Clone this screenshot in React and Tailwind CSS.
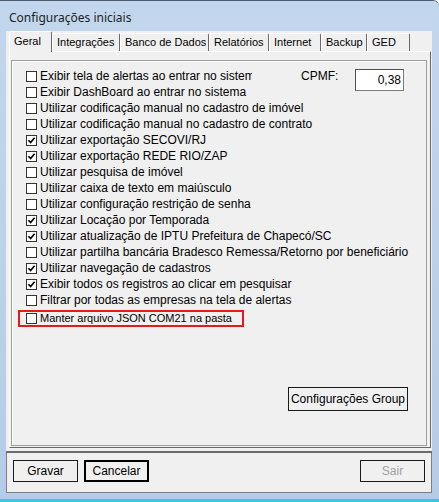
import React, { useState } from 'react';

const tabs = [
  { label: 'Geral', w: 'w-[43px]' },
  { label: 'Integrações', w: 'w-[68px]' },
  { label: 'Banco de Dados', w: 'w-[89px]' },
  { label: 'Relatórios', w: 'w-[60px]' },
  { label: 'Internet', w: 'w-[52px]' },
  { label: 'Backup', w: 'w-[46px]' },
  { label: 'GED', w: 'w-[43px]' },
];

const options = [
  { label: 'Exibir tela de alertas ao entrar no sistema', checked: false },
  { label: 'Exibir DashBoard ao entrar no sistema', checked: false },
  { label: 'Utilizar codificação manual no cadastro de imóvel', checked: false },
  { label: 'Utilizar codificação manual no cadastro de contrato', checked: false },
  { label: 'Utilizar exportação SECOVI/RJ', checked: true },
  { label: 'Utilizar exportação REDE RIO/ZAP', checked: true },
  { label: 'Utilizar pesquisa de imóvel', checked: false },
  { label: 'Utilizar caixa de texto em maiúsculo', checked: false },
  { label: 'Utilizar configuração restrição de senha', checked: false },
  { label: 'Utilizar Locação por Temporada', checked: true },
  { label: 'Utilizar atualização de IPTU Prefeitura de Chapecó/SC', checked: true },
  { label: 'Utilizar partilha bancária Bradesco Remessa/Retorno por beneficiário', checked: false },
  { label: 'Utilizar navegação de cadastros', checked: true },
  { label: 'Exibir todos os registros ao clicar em pesquisar', checked: true },
  { label: 'Filtrar por todas as empresas na tela de alertas', checked: false },
];

function CheckBox({ checked, onChange }) {
  return (
    <span
      onClick={onChange}
      className="w-[11px] h-[11px] shrink-0 border border-[#333333] bg-white flex items-center justify-center"
    >
      {checked && (
        <svg width="9" height="9" viewBox="0 0 9 9">
          <path d="M1.5 4.2 L3.6 6.5 L7.6 1.8" fill="none" stroke="#000" strokeWidth="1.7" />
        </svg>
      )}
    </span>
  );
}

function WinButton({ children, isDefault, disabled, className = '' }) {
  return (
    <button
      type="button"
      disabled={disabled}
      className={`h-[22px] bg-[#f0f0f0] text-[12px] ${
        isDefault ? 'border-2 border-black' : 'border border-[#1a1a1a]'
      } ${disabled ? 'text-[#a0a0a0]' : 'text-black'} ${className}`}
    >
      {children}
    </button>
  );
}

export default function App() {
  const [checks, setChecks] = useState(options.map(o => o.checked));
  const [keepJson, setKeepJson] = useState(false);
  const [activeTab, setActiveTab] = useState(0);

  const toggle = (i) => setChecks(c => c.map((v, j) => (j === i ? !v : v)));

  return (
    <div
      className="w-[439px] h-[502px] bg-gradient-to-b from-[#c2d7ee] to-[#b4cce8] border-t border-[#4a5b70] rounded-tr-[6px] flex flex-col text-black"
      style={{ fontFamily: '"Liberation Sans", Arial, sans-serif' }}
    >
      {/* title bar */}
      <div className="h-[30px] pl-[9px] pt-[8px] text-[12px] text-[#1e1e1e]" style={{ fontFamily: '"Noto Sans", sans-serif' }}>
        Configurações iniciais
      </div>

      {/* client area */}
      <div className="ml-[6px] mr-[7px] bg-[#f0f0f0] flex flex-col">
        {/* tab strip */}
        <div className="h-[20px] pl-[3px] flex items-end">
          {tabs.map((t, i) => (
            <div
              key={t.label}
              onClick={() => setActiveTab(i)}
              className={`${t.w} pl-[4px] text-[11px] leading-[17px] whitespace-nowrap border-l border-t border-r border-l-white border-t-white border-r-[#696969] rounded-t-[2px] ${
                i === activeTab ? 'h-[21px] pt-[1px] -mb-[1px] bg-[#f0f0f0] relative z-10' : 'h-[18px] bg-[#f0f0f0]'
              }`}
            >
              {t.label}
            </div>
          ))}
        </div>

        {/* tab panel */}
        <div className="ml-[3px] mr-[1px] h-[397px] border border-t-white border-l-white border-r-[#696969] border-b-[#696969] flex flex-col">
          <div className="mt-[8px] ml-[1px] mr-[3px] h-[386px] border border-[#a0a0a0] shadow-[inset_1px_1px_0_#ffffff] flex flex-col text-[12px]">
            <div className="pt-[7px] pl-[14px] flex flex-col">
              {options.map((o, i) => (
                <div key={o.label} className="h-[16px] flex items-center">
                  <CheckBox checked={checks[i]} onChange={() => toggle(i)} />
                  {i === 0 ? (
                    <>
                      <span className="ml-[3px] w-[212px] shrink-0 overflow-hidden whitespace-nowrap">{o.label}</span>
                      <span className="ml-[49px] w-[54px] shrink-0">CPMF:</span>
                      <input
                        defaultValue="0,38"
                        className="mt-[7px] w-[49px] h-[22px] shrink-0 bg-white border border-[#7a7a7a] border-t-[#505050] border-l-[#505050] text-right pr-[2px] text-[12px] outline-none"
                      />
                    </>
                  ) : (
                    <span className="ml-[3px] whitespace-nowrap">{o.label}</span>
                  )}
                </div>
              ))}
              <div className="mt-[2px] -ml-[8px] w-[226px] h-[17px] border-2 border-[#e31b1b] pl-[6px] flex items-center">
                <CheckBox checked={keepJson} onChange={() => setKeepJson(v => !v)} />
                <span className="ml-[3px] whitespace-nowrap text-[11px]">Manter arquivo JSON COM21 na pasta</span>
              </div>
            </div>

            <div className="flex-1" />
            <div className="flex justify-end mr-[18px] mb-[34px]">
              <WinButton className="w-[120px] h-[24px]">Configurações Group</WinButton>
            </div>
          </div>
        </div>

        {/* separator + bottom bar */}
        <div className="mt-[3px] h-[2px] bg-[#6b6b6b]" />
        <div className="h-[40px] border-l border-r border-b border-[#7f7f7f] flex items-center px-[6px] pb-[4px]">
          <WinButton className="w-[65px]">Gravar</WinButton>
          <WinButton isDefault className="w-[65px] ml-[6px]">Cancelar</WinButton>
          <WinButton disabled className="w-[65px] ml-auto">Sair</WinButton>
        </div>
      </div>

      <div className="flex-1" />
      <div className="h-[3px] bg-[#36c8de]" />
    </div>
  );
}
